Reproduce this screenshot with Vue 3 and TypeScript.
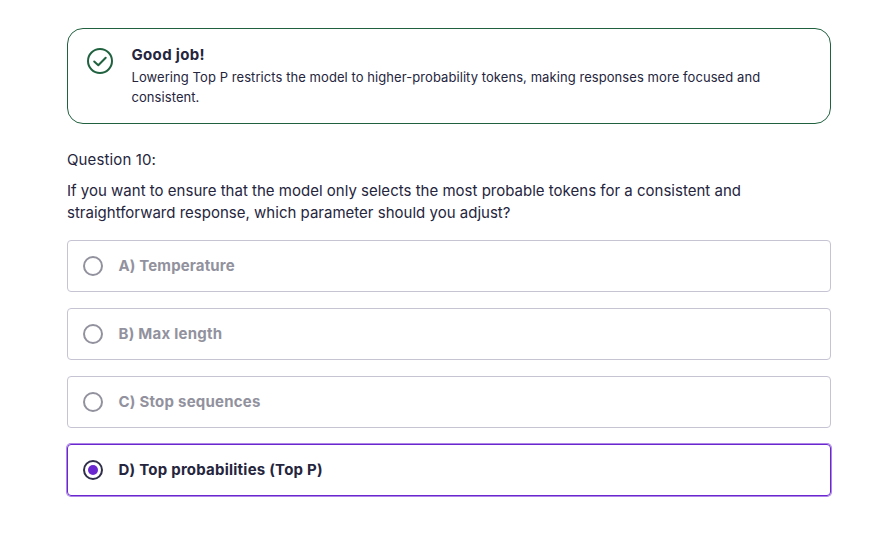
<script setup lang="ts">
import { ref } from 'vue'

interface Option {
  id: string
  label: string
}

const options: Option[] = [
  { id: 'a', label: 'A) Temperature' },
  { id: 'b', label: 'B) Max length' },
  { id: 'c', label: 'C) Stop sequences' },
  { id: 'd', label: 'D) Top probabilities (Top P)' },
]
const selected = ref('d')
</script>

<template>
  <main class="quiz">
    <section class="feedback">
      <svg class="check" viewBox="0 0 26 26" fill="none" stroke="#20613f" stroke-width="2">
        <circle cx="13" cy="13" r="12" />
        <path d="M7.2 13.5l4.1 3.8 7.4-7.6" stroke-linecap="round" stroke-linejoin="round" />
      </svg>
      <div>
        <h2><span class="line">Good job!</span></h2>
        <p>
          <span class="line">Lowering Top P restricts the model to higher-probability tokens, making responses more focused and</span>
          <span class="line">consistent.</span>
        </p>
      </div>
    </section>
    <h3><span class="line">Question 10:</span></h3>
    <p class="question">
      <span class="line">If you want to ensure that the model only selects the most probable tokens for a consistent and</span>
      <span class="line">straightforward response, which parameter should you adjust?</span>
    </p>
    <div class="options" role="radiogroup">
      <div
        v-for="option in options"
        :key="option.id"
        class="option"
        :class="[option.id, { selected: option.id === selected }]"
        role="radio"
        :aria-checked="option.id === selected"
      >
        <span class="radio"></span>
        <span class="line label">{{ option.label }}</span>
      </div>
    </div>
  </main>
</template>

<style>
body {
  background: #fff;
}
</style>

<style scoped>
.quiz {
  box-sizing: border-box;
  width: 879px;
  height: 541px;
  padding: 28px 48px 0 67px;
  font-family: Inter, sans-serif;
  color: #25253d;
}
.line {
  display: block;
  width: max-content;
  white-space: nowrap;
}
h2, h3, p { margin: 0; }
.feedback {
  box-sizing: border-box;
  width: 764px;
  height: 96px;
  display: flex;
  gap: 18.5px;
  padding: 16px 19px;
  border: 1px solid #20613f;
  border-radius: 16px;
}
.check { width: 26px; height: 26px; flex: none; margin-top: 3px; }
h2 { font-size: 15px; line-height: 20px; font-weight: 700; letter-spacing: 0.33px; }
.feedback p { font-size: 13px; line-height: 20px; margin-top: 2px; letter-spacing: 0.07px; }
h3 { font-size: 15px; line-height: 22px; font-weight: 400; margin-top: 25px; letter-spacing: 0.12px; }
.question { font-size: 15px; line-height: 22px; margin-top: 9px; letter-spacing: 0.01px; }
.options { display: grid; gap: 16px; margin-top: 16px; }
.option {
  box-sizing: border-box;
  width: 764px;
  height: 52px;
  border: 1px solid #c6c4d3;
  border-radius: 4px;
  display: flex;
  align-items: center;
  gap: 15.5px;
  padding: 0 15px;
  color: #92929e;
  font-size: 15px;
  font-weight: 700;
  letter-spacing: 0.23px;
}
.option.a { letter-spacing: 0.13px; }
.label { padding-bottom: 2px; }
.radio {
  box-sizing: border-box;
  width: 20px;
  height: 20px;
  border: 2px solid #92929e;
  border-radius: 50%;
}
.option.selected { border-color: #6a27d0; color: #25253d; box-shadow: 0 0 0 1px #ad86e6; }
.selected .radio {
  display: grid;
  place-items: center;
  border-color: #2f2f4b;
}
.selected .radio::after {
  content: '';
  width: 10px;
  height: 10px;
  border-radius: 50%;
  background: #6a27d0;
}
</style>
